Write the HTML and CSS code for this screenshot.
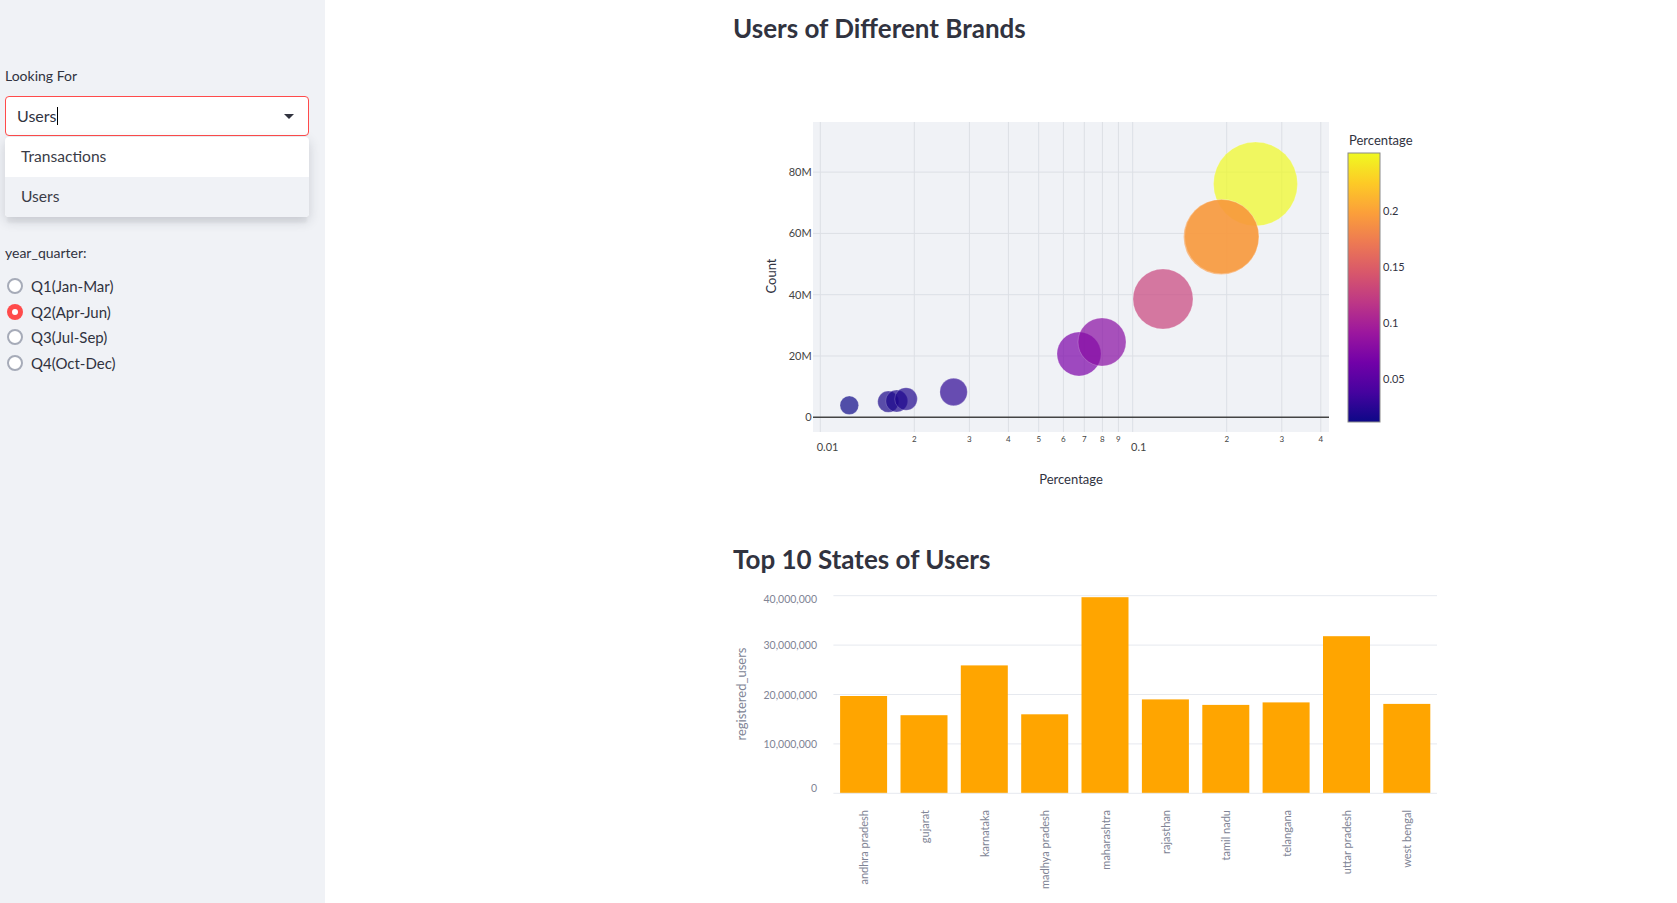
FILE: index.html
```html
<!DOCTYPE html>
<html lang="en">
<head>
<meta charset="utf-8">
<title>Dashboard</title>
<link rel="stylesheet" href="styles.css">
</head>
<body>
<div class="app">
  <aside class="sidebar">
    <div class="widget">
      <div class="wlabel">Looking For</div>
      <div class="select">
        <span class="sel-value">Users</span><span class="cursor"></span>
        <svg class="caret" width="10" height="5" viewBox="0 0 10 5"><path d="M0 0 L10 0 L5 5 Z" fill="#31333f"/></svg>
        <div class="menu">
          <div class="menu-item">Transactions</div>
          <div class="menu-item active">Users</div>
        </div>
      </div>
    </div>
    <div class="radio-group">
      <div class="wlabel">year_quarter:</div>
      <div class="radio"><span class="dot"></span><span class="rlabel">Q1(Jan-Mar)</span></div>
      <div class="radio"><span class="dot on"></span><span class="rlabel">Q2(Apr-Jun)</span></div>
      <div class="radio"><span class="dot"></span><span class="rlabel">Q3(Jul-Sep)</span></div>
      <div class="radio"><span class="dot"></span><span class="rlabel">Q4(Oct-Dec)</span></div>
    </div>
  </aside>
  <main class="main">
    <div class="block">
      <h3 class="title">Users of Different Brands</h3>
      <svg class="chart1" width="704" height="440" viewBox="0 0 704 440">
        <defs>
          <linearGradient id="plasma" x1="0" y1="1" x2="0" y2="0">
            <stop offset="0" stop-color="#0d0887"/>
            <stop offset="0.111" stop-color="#46039f"/>
            <stop offset="0.222" stop-color="#7201a8"/>
            <stop offset="0.333" stop-color="#9c179e"/>
            <stop offset="0.444" stop-color="#bd3786"/>
            <stop offset="0.555" stop-color="#d8576b"/>
            <stop offset="0.666" stop-color="#ed7953"/>
            <stop offset="0.777" stop-color="#fb9f3a"/>
            <stop offset="0.888" stop-color="#fdca26"/>
            <stop offset="1" stop-color="#f0f921"/>
          </linearGradient>
        </defs>
        <rect x="80" y="62" width="516" height="310" fill="#f0f2f6"/>
        <g class="grid">
          <line x1="80" x2="596" y1="112.1" y2="112.1"/>
          <line x1="80" x2="596" y1="173.4" y2="173.4"/>
          <line x1="80" x2="596" y1="234.7" y2="234.7"/>
          <line x1="80" x2="596" y1="296" y2="296"/>
          <line x1="87.3" x2="87.3" y1="62" y2="372"/>
          <line x1="181.3" x2="181.3" y1="62" y2="372"/>
          <line x1="236.4" x2="236.4" y1="62" y2="372"/>
          <line x1="275.4" x2="275.4" y1="62" y2="372"/>
          <line x1="305.7" x2="305.7" y1="62" y2="372"/>
          <line x1="330.4" x2="330.4" y1="62" y2="372"/>
          <line x1="351.3" x2="351.3" y1="62" y2="372"/>
          <line x1="369.4" x2="369.4" y1="62" y2="372"/>
          <line x1="385.4" x2="385.4" y1="62" y2="372"/>
          <line x1="399.7" x2="399.7" y1="62" y2="372"/>
          <line x1="493.7" x2="493.7" y1="62" y2="372"/>
          <line x1="548.8" x2="548.8" y1="62" y2="372"/>
          <line x1="587.8" x2="587.8" y1="62" y2="372"/>
        </g>
        <line class="zeroline" x1="80" x2="596" y1="357.3" y2="357.3"/>
        <g class="bubbles">
          <circle cx="116.3" cy="345.3" r="9.3" fill="#0d0887"/>
          <circle cx="155.3" cy="341.7" r="10.6" fill="#180689"/>
          <circle cx="163.7" cy="341" r="11" fill="#1b068c"/>
          <circle cx="173" cy="339" r="11.3" fill="#1e068d"/>
          <circle cx="220.6" cy="332" r="13.7" fill="#2c0594"/>
          <circle cx="346" cy="294" r="22" fill="#7a02a8"/>
          <circle cx="369" cy="282" r="24" fill="#870ca3"/>
          <circle cx="430" cy="239" r="30" fill="#c8437c"/>
          <circle cx="522.5" cy="124" r="42" fill="#f0f921"/>
          <circle cx="488.2" cy="177" r="37.6" fill="#f89540"/>
          <circle cx="488.7" cy="176.6" r="37.2" fill="#f89a3c"/>
        </g>
        <g class="ylab">
          <text x="78.7" y="116">80M</text>
          <text x="78.7" y="177.4">60M</text>
          <text x="78.7" y="238.7">40M</text>
          <text x="78.7" y="300">20M</text>
          <text x="78.7" y="361.3">0</text>
        </g>
        <g class="xminor">
          <text x="181.3" y="382">2</text>
          <text x="236.4" y="382">3</text>
          <text x="275.4" y="382">4</text>
          <text x="305.7" y="382">5</text>
          <text x="330.4" y="382">6</text>
          <text x="351.3" y="382">7</text>
          <text x="369.4" y="382">8</text>
          <text x="385.4" y="382">9</text>
          <text x="493.7" y="382">2</text>
          <text x="548.8" y="382">3</text>
          <text x="587.8" y="382">4</text>
        </g>
        <g class="xmajor">
          <text x="83.7" y="391">0.01</text>
          <text x="398" y="391">0.1</text>
        </g>
        <text class="axtitle" transform="translate(37.5 216) rotate(-90)" text-anchor="middle" dominant-baseline="central">Count</text>
        <text class="axtitle" x="338" y="424" text-anchor="middle">Percentage</text>
        <rect x="615" y="93" width="32" height="269" fill="url(#plasma)" stroke="#8a8a8a" stroke-width="1"/>
        <text class="cbtitle" x="616" y="85">Percentage</text>
        <g class="cblab">
          <text x="650" y="154.7">0.2</text>
          <text x="650" y="210.7">0.15</text>
          <text x="650" y="267">0.1</text>
          <text x="650" y="323">0.05</text>
        </g>
      </svg>
      <h3 class="title second">Top 10 States of Users</h3>
      <svg class="chart2" width="704" height="323" viewBox="0 0 704 323">
        <g class="bgrid">
          <line x1="100.4" x2="704" y1="15.7" y2="15.7"/>
          <line x1="100.4" x2="704" y1="65.1" y2="65.1"/>
          <line x1="100.4" x2="704" y1="114.5" y2="114.5"/>
          <line x1="100.4" x2="704" y1="163.9" y2="163.9"/>
        </g>
        <g class="bars">
          <rect x="107.1" y="116" width="47" height="97.3"/>
          <rect x="167.5" y="135.2" width="47" height="78.1"/>
          <rect x="227.8" y="85.4" width="47" height="127.9"/>
          <rect x="288.2" y="134.3" width="47" height="79"/>
          <rect x="348.5" y="17.2" width="47" height="196.1"/>
          <rect x="408.9" y="119.4" width="47" height="93.9"/>
          <rect x="469.3" y="124.9" width="47" height="88.4"/>
          <rect x="529.6" y="122.4" width="47" height="90.9"/>
          <rect x="590" y="56.2" width="47" height="157.1"/>
          <rect x="650.3" y="123.9" width="47" height="89.4"/>
        </g>
        <line class="baxis" x1="100.4" x2="704" y1="213.3" y2="213.3"/>
        <g class="bylab">
          <text x="84" y="23">40,000,000</text>
          <text x="84" y="69.1">30,000,000</text>
          <text x="84" y="118.5">20,000,000</text>
          <text x="84" y="167.9">10,000,000</text>
          <text x="84" y="211.5">0</text>
        </g>
        <text class="bytitle" transform="translate(7.7 114) rotate(-90)" text-anchor="middle" dominant-baseline="central">registered_users</text>
        <g class="bxlab">
          <text transform="translate(130.6 230) rotate(-90)">andhra pradesh</text>
          <text transform="translate(191 230) rotate(-90)">gujarat</text>
          <text transform="translate(251.3 230) rotate(-90)">karnataka</text>
          <text transform="translate(311.7 230) rotate(-90)">madhya pradesh</text>
          <text transform="translate(372 230) rotate(-90)">maharashtra</text>
          <text transform="translate(432.4 230) rotate(-90)">rajasthan</text>
          <text transform="translate(492.8 230) rotate(-90)">tamil nadu</text>
          <text transform="translate(553.1 230) rotate(-90)">telangana</text>
          <text transform="translate(613.5 230) rotate(-90)">uttar pradesh</text>
          <text transform="translate(673.8 230) rotate(-90)">west bengal</text>
        </g>
      </svg>
    </div>
  </main>
</div>
</body>
</html>
```
FILE: styles.css
```css
* { box-sizing: border-box; }
html, body {
  margin: 0;
  padding: 0;
  background: #ffffff;
  font-family: Lato, "Noto Sans", "Liberation Sans", sans-serif;
  color: #31333f;
}
.app {
  display: flex;
  width: 1677px;
  height: 903px;
  overflow: hidden;
}
.sidebar {
  width: 325px;
  flex: 0 0 325px;
  background: #f0f2f6;
  padding: 66px 16px 0 5px;
}
.wlabel {
  font-size: 14px;
  line-height: 20px;
  height: 20px;
}
.select {
  position: relative;
  margin-top: 10px;
  width: 304px;
  height: 40px;
  background: #ffffff;
  border: 1px solid #ff4b4b;
  border-radius: 4px;
  display: flex;
  align-items: center;
  padding: 0 14px 0 11px;
}
.sel-value {
  font-size: 16px;
  line-height: 20px;
}
.cursor {
  display: inline-block;
  width: 1px;
  height: 18px;
  background: #000;
  margin-left: 1px;
}
.caret {
  margin-left: auto;
  display: block;
}
.menu {
  position: absolute;
  left: -1px;
  top: 40px;
  width: 304px;
  background: #ffffff;
  border-radius: 4px;
  overflow: hidden;
  box-shadow: 0 4px 12px rgba(40, 44, 60, 0.18), 0 8px 2px -2px rgba(40, 44, 60, 0.04);
  z-index: 5;
}
.menu-item {
  height: 40px;
  line-height: 38px;
  padding-left: 16px;
  font-size: 15.6px;
  color: #3a3c47;
}
.menu-item.active {
  background: #f0f2f6;
}
.radio-group {
  margin-top: 107px;
}
.radio-group .wlabel {
  margin-bottom: 10px;
}
.radio {
  display: flex;
  align-items: center;
  height: 25.7px;
  padding-left: 2px;
}
.dot {
  width: 16px;
  height: 16px;
  border-radius: 50%;
  border: 2px solid #a6abb8;
  background: #ffffff;
  flex: 0 0 16px;
  position: relative;
}
.dot.on {
  border: none;
  background: #ff4b4b;
}
.dot.on::after {
  content: "";
  position: absolute;
  left: 5px;
  top: 5px;
  width: 6px;
  height: 6px;
  border-radius: 50%;
  background: #ffffff;
}
.rlabel {
  margin-left: 8px;
  font-size: 15px;
  line-height: 20px;
}
.main {
  flex: 1;
  padding: 11px 0 0 408px;
}
.block {
  width: 704px;
}
.title {
  margin: 0;
  font-size: 26px;
  line-height: 34px;
  font-weight: 700;
  color: #31333f;
}
.title.second {
  margin-top: 42px;
}
.chart1 {
  display: block;
  margin-top: 15px;
}
.chart2 {
  display: block;
  margin-top: 4px;
}
.grid line {
  stroke: #dcdfe5;
  stroke-width: 1;
}
.zeroline {
  stroke: #444444;
  stroke-width: 1.5;
}
.bubbles circle {
  fill-opacity: 0.7;
  stroke: #ffffff;
  stroke-opacity: 0.4;
  stroke-width: 0.5;
}
.ylab text {
  font-size: 11px;
  fill: #444444;
  text-anchor: end;
}
.xminor text {
  font-size: 8px;
  fill: #444444;
  text-anchor: middle;
}
.xmajor text {
  font-size: 11px;
  fill: #444444;
}
.axtitle {
  font-size: 13px;
  fill: #31333f;
}
.cbtitle {
  font-size: 13px;
  fill: #31333f;
}
.cblab text {
  font-size: 11px;
  fill: #31333f;
}
.bgrid line, .baxis {
  stroke: #e6e9ef;
  stroke-width: 1;
}
.bars rect {
  fill: #ffa500;
}
.bylab text {
  font-size: 10.5px;
  fill: #808495;
  text-anchor: end;
}
.bytitle {
  font-size: 13px;
  fill: #808495;
}
.bxlab text {
  font-size: 11px;
  fill: #808495;
  text-anchor: end;
  dominant-baseline: central;
}
```
